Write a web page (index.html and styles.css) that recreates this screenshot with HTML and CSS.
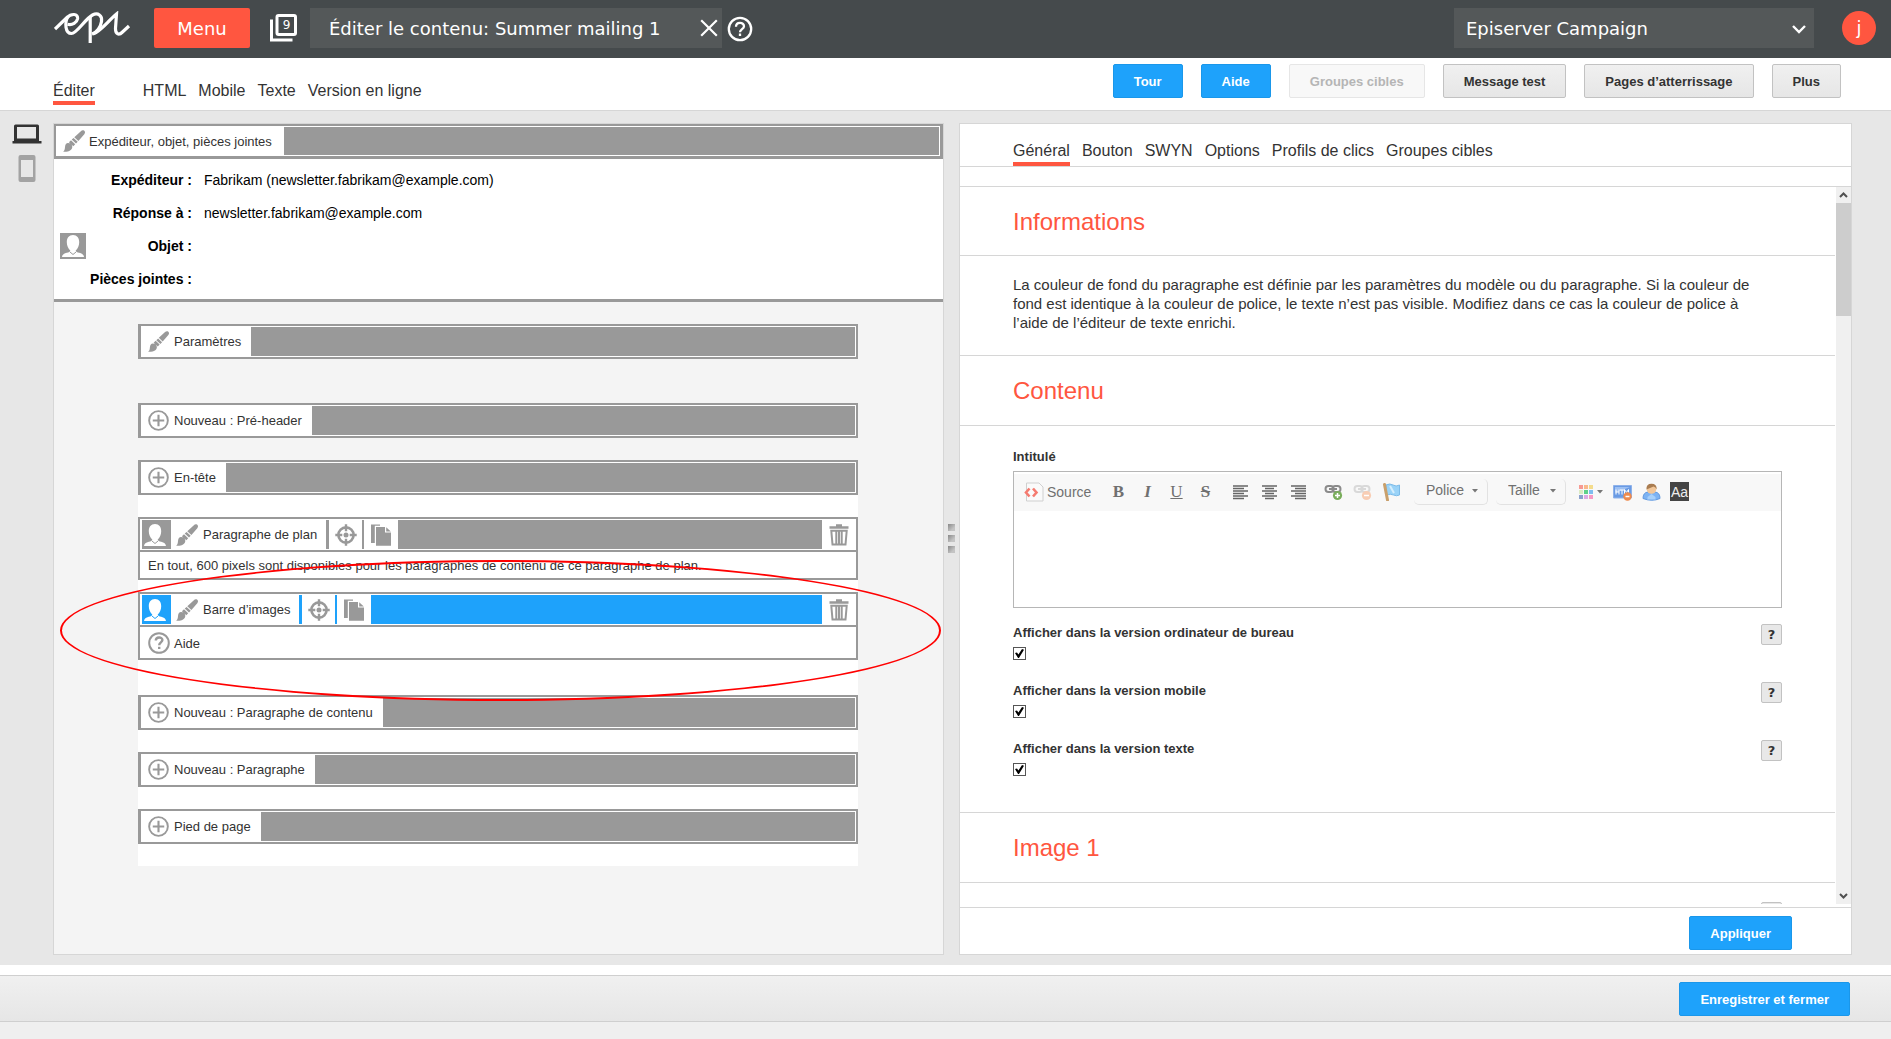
FILE: index.html
```html
<!DOCTYPE html>
<html lang="fr">
<head>
<meta charset="utf-8">
<title>Éditer le contenu: Summer mailing 1</title>
<link rel="stylesheet" href="styles.css">
</head>
<body>
<svg class="defs" aria-hidden="true">
  <symbol id="i-brush" viewBox="0 0 22 22">
    <path fill="currentColor" d="M21 0.600c1.400 0.900 1.200 2.500.3 3.600L15.400 11 11.300 7.200 17.600 1.400C18.700 0.400 20 0 21 0.600zM10.600 7.900l4.100 3.800-1.700 1.900-4.300-4zM8 10.300l4.200 3.900-1.900 2.100-4.400-4.100zM5 13c2.300 0 4.200 1.700 4.300 3.700C9.300 19.800 6.500 22 0.100 21.700c1.300-0.900 1.700-2.200 1.900-4.800 0.200-2.400 1.300-3.800 3-3.900z"/>
  </symbol>
  <symbol id="i-plus" viewBox="0 0 22 22">
    <circle cx="11" cy="11" r="9.800" fill="none" stroke="currentColor" stroke-width="2"/>
    <path d="M11 5v12M5 11h12" stroke="currentColor" stroke-width="2.200" fill="none"/>
  </symbol>
  <symbol id="i-help" viewBox="0 0 22 22">
    <circle cx="11" cy="11" r="9.800" fill="none" stroke="currentColor" stroke-width="2"/>
    <path d="M7.800 8.600c0-4.200 6.600-4 6.600-0.500 0 2.200-3.200 2.400-3.200 5.100" stroke="currentColor" stroke-width="2.400" fill="none"/>
    <path d="M10 14.800h2.400V17H10z" fill="currentColor"/>
  </symbol>
  <symbol id="i-user" viewBox="0 0 26 26">
    <path fill="#fff" d="M13 2c4 0 6.200 3 6.200 7.200 0 3.300-1.500 6.600-3.500 8.200 0.300 1.500 1.500 1.800 3.500 2.300 3 0.700 4.500 2 4.800 4.300H2c0.300-2.300 1.800-3.600 4.800-4.300 2-0.500 3.200-0.800 3.500-2.300-2-1.600-3.500-4.900-3.500-8.200C6.800 5 9 2 13 2z"/>
    <path d="M10 19l3 2.500 3-2.500" fill="none" stroke="currentColor" stroke-width="1"/>
  </symbol>
  <symbol id="i-target" viewBox="0 0 22 22">
    <circle cx="11" cy="11" r="7.600" fill="none" stroke="currentColor" stroke-width="2.600"/>
    <circle cx="11" cy="11" r="2.500" fill="currentColor"/>
    <path d="M11 0.300v7M11 14.700v7M0.300 11h7M14.700 11h7" stroke="currentColor" stroke-width="2.400"/>
  </symbol>
  <symbol id="i-copy" viewBox="0 0 22 22">
    <path fill="currentColor" d="M1 0.500h9v1.200H4.800V19H1zM6 3h9v5.500h6V21.700H6zM16.200 3.200L20.800 7.500h-4.600z"/>
  </symbol>
  <symbol id="i-trash" viewBox="0 0 20 22">
    <path fill="currentColor" d="M7 0.300h6v2h6.500v2.500H0.500V2.300H7z"/>
    <path fill="none" stroke="currentColor" stroke-width="2" d="M2.300 6.800h15.400L16.500 20.500H3.500zM7.300 7v13M10 7v13M12.700 7v13"/>
  </symbol>
</svg>

<header class="topbar">
  <a class="logo" href="#" aria-label="Epi">
    <svg width="78" height="34" viewBox="0 0 78 34" fill="none" stroke="#fff" stroke-width="3.200">
      <path d="M1 18L13 6.500C17 2.500 24.500 2 23.500 8C22.800 11.500 18.500 14.500 13.500 13.300"/>
      <path d="M14 5.500C10.500 11.500 11 22.500 17.500 22.500C23 22.500 31 8 38.500 4C44 1.300 48.500 4.500 47.500 10.500C46.700 16 43 21.500 38 23"/>
      <path d="M36.200 6V32M39 23C46 21 54 10 62.500 3L61.500 17.500C61.400 23.500 65 24.500 68.500 21L75 15"/>
    </svg>
  </a>
  <button class="menu-btn" type="button">Menu</button>
  <button class="windows" type="button" aria-label="Fenêtres ouvertes">
    <svg width="28" height="28" viewBox="0 0 28 28" fill="none" stroke="#fff" stroke-width="3">
      <path d="M1.500 5.500v20.500h21"/><rect x="7" y="1.500" width="18.500" height="19" rx="1.500"/>
    </svg>
    <span class="windows-count">9</span>
  </button>
  <div class="doc-tab">
    <span>Éditer le contenu: Summer mailing 1</span>
    <button class="plain" type="button" aria-label="Fermer">
      <svg width="18" height="18" viewBox="0 0 18 18" stroke="#fff" stroke-width="2.200"><path d="M1.200 1.200l15.600 15.600M16.800 1.200L1.200 16.800"/></svg>
    </button>
  </div>
  <button class="plain top-help" type="button" aria-label="Aide">
    <svg width="26" height="26" viewBox="0 0 26 26" fill="none" stroke="#fff" stroke-width="2.300">
      <circle cx="13" cy="13" r="11.200"/><path d="M9 10.800c0-5.200 8-5 8-0.600 0 2.800-4 3-4 6"/><path d="M13 17.500v2.500"/>
    </svg>
  </button>
  <div class="select-wrap client">
    <select aria-label="Client"><option>Episerver Campaign</option></select>
    <svg width="14" height="9" viewBox="0 0 14 9" fill="none" stroke="#fff" stroke-width="2.400"><path d="M1 1l6 6 6-6"/></svg>
  </div>
  <a class="avatar" href="#">j</a>
</header>

<div class="subbar">
  <nav class="tabs view-tabs">
    <a class="active" href="#">Éditer</a>
    <a href="#">HTML</a>
    <a href="#">Mobile</a>
    <a href="#">Texte</a>
    <a href="#">Version en ligne</a>
  </nav>
  <div class="actions">
    <button class="btn primary" type="button">Tour</button>
    <button class="btn primary" type="button">Aide</button>
    <button class="btn" type="button" disabled>Groupes cibles</button>
    <button class="btn" type="button">Message test</button>
    <button class="btn" type="button">Pages d’atterrissage</button>
    <button class="btn" type="button">Plus</button>
  </div>
</div>

<main class="workspace">
  <div class="devices">
    <button class="plain" type="button" aria-label="Ordinateur">
      <svg width="30" height="20" viewBox="0 0 30 20"><path fill="#333" d="M3.500 0.500h22q1.500 0 1.500 1.500v15h2.500v2.500H0.500V17H2V2q0-1.500 1.500-1.500zM5 3v11.500h19V3z"/></svg>
    </button>
    <button class="plain" type="button" aria-label="Mobile">
      <svg width="18" height="27" viewBox="0 0 18 27"><path fill="#a3a3a3" fill-rule="evenodd" d="M2.500 0h13q2 0 2 2v23q0 2-2 2h-13q-2 0-2-2V2q0-2 2-2zM3 5v17h12V5z"/></svg>
    </button>
  </div>

  <section class="preview">
    <div class="block head-block">
      <div class="bar">
        <button class="label" type="button"><svg width="22" height="22"><use href="#i-brush"/></svg>Expéditeur, objet, pièces jointes</button>
        <span class="fill"></span>
      </div>
    </div>
    <dl class="sender">
      <dt>Expéditeur :</dt><dd>Fabrikam (newsletter.fabrikam@example.com)</dd>
      <dt>Réponse à :</dt><dd>newsletter.fabrikam@example.com</dd>
      <dt><svg class="subject-user" width="26" height="26"><use href="#i-user"/></svg>Objet :</dt><dd></dd>
      <dt>Pièces jointes :</dt><dd></dd>
    </dl>
    <div class="canvas">
      <div class="block settings">
        <div class="bar">
          <button class="label" type="button"><svg width="21" height="21"><use href="#i-brush"/></svg>Paramètres</button>
          <span class="fill"></span>
        </div>
      </div>
      <div class="block">
        <div class="bar">
          <button class="label" type="button"><svg width="21" height="21"><use href="#i-plus"/></svg>Nouveau : Pré-header</button>
          <span class="fill"></span>
        </div>
      </div>
      <div class="mail">
        <div class="block">
          <div class="bar">
            <button class="label" type="button"><svg width="21" height="21"><use href="#i-plus"/></svg>En-tête</button>
            <span class="fill"></span>
          </div>
        </div>
        <div class="block">
          <div class="bar tools">
            <button class="user" type="button" aria-label="Personnaliser"><svg width="26" height="26"><use href="#i-user"/></svg></button>
            <button class="label" type="button"><svg width="22" height="22"><use href="#i-brush"/></svg>Paragraphe de plan</button>
            <button class="tool target" type="button" aria-label="Cibler"><svg width="22" height="22"><use href="#i-target"/></svg></button>
            <button class="tool copy" type="button" aria-label="Copier"><svg width="22" height="22"><use href="#i-copy"/></svg></button>
            <span class="fill"></span>
            <button class="tool" type="button" aria-label="Supprimer"><svg width="20" height="22"><use href="#i-trash"/></svg></button>
          </div>
          <p class="note">En tout, 600 pixels sont disponibles pour les paragraphes de contenu de ce paragraphe de plan.</p>
        </div>
        <div class="block image-bar">
          <div class="bar tools selected">
            <button class="user" type="button" aria-label="Personnaliser"><svg width="26" height="26"><use href="#i-user"/></svg></button>
            <button class="label" type="button"><svg width="22" height="22"><use href="#i-brush"/></svg>Barre d’images</button>
            <button class="tool target" type="button" aria-label="Cibler"><svg width="22" height="22"><use href="#i-target"/></svg></button>
            <button class="tool copy" type="button" aria-label="Copier"><svg width="22" height="22"><use href="#i-copy"/></svg></button>
            <span class="fill"></span>
            <button class="tool" type="button" aria-label="Supprimer"><svg width="20" height="22"><use href="#i-trash"/></svg></button>
          </div>
          <a class="block-help" href="#"><svg width="22" height="22"><use href="#i-help"/></svg>Aide</a>
        </div>
        <div class="block">
          <div class="bar">
            <button class="label" type="button"><svg width="21" height="21"><use href="#i-plus"/></svg>Nouveau : Paragraphe de contenu</button>
            <span class="fill"></span>
          </div>
        </div>
        <div class="block">
          <div class="bar">
            <button class="label" type="button"><svg width="21" height="21"><use href="#i-plus"/></svg>Nouveau : Paragraphe</button>
            <span class="fill"></span>
          </div>
        </div>
        <div class="block">
          <div class="bar">
            <button class="label" type="button"><svg width="21" height="21"><use href="#i-plus"/></svg>Pied de page</button>
            <span class="fill"></span>
          </div>
        </div>
      </div>
    </div>
    <div class="marker"></div>
  </section>

  <div class="splitter"><span></span><span></span><span></span></div>

  <section class="inspector">
    <nav class="tabs inspector-tabs">
      <a class="active" href="#">Général</a>
      <a href="#">Bouton</a>
      <a href="#">SWYN</a>
      <a href="#">Options</a>
      <a href="#">Profils de clics</a>
      <a href="#">Groupes cibles</a>
    </nav>
    <div class="scroller">
      <div class="form">
        <h2>Informations</h2>
        <p class="info">La couleur de fond du paragraphe est définie par les paramètres du modèle ou du paragraphe. Si la couleur de fond est identique à la couleur de police, le texte n’est pas visible. Modifiez dans ce cas la couleur de police à l’aide de l’éditeur de texte enrichi.</p>
        <h2>Contenu</h2>
        <div class="fields">
          <label class="field-label" for="intitule">Intitulé</label>
          <div class="editor">
            <div class="toolbar">
              <button class="source" type="button">
                <svg width="20" height="20" viewBox="0 0 20 20"><path d="M2.500 1h12.500l4 4v14h-16.500z" fill="#fafafa" stroke="#d0d0d0"/><path d="M5.500 6.500L2 10.500l3.500 4M9 6.500l3.500 4-3.500 4" fill="none" stroke="#f57b70" stroke-width="2.600"/></svg>Source
              </button>
              <div class="group styles">
                <button type="button" class="b">B</button>
                <button type="button" class="i">I</button>
                <button type="button" class="u">U</button>
                <button type="button" class="s">S</button>
              </div>
              <div class="group">
                <button type="button" aria-label="Gauche"><svg width="16" height="16" viewBox="0 0 16 16" stroke="#666" stroke-width="1.300"><path d="M0 2h15M0 4.500h11M0 7h15M0 9.500h11M0 12h15M0 14.500h11"/></svg></button>
                <button type="button" aria-label="Centrer"><svg width="16" height="16" viewBox="0 0 16 16" stroke="#666" stroke-width="1.300"><path d="M0 2h15M3 4.500h9M0 7h15M3 9.500h9M0 12h15M3 14.500h9"/></svg></button>
                <button type="button" aria-label="Droite"><svg width="16" height="16" viewBox="0 0 16 16" stroke="#666" stroke-width="1.300"><path d="M0 2h15M4 4.500h11M0 7h15M4 9.500h11M0 12h15M4 14.500h11"/></svg></button>
              </div>
              <div class="group">
                <button type="button" aria-label="Lien"><svg width="19" height="18" viewBox="0 0 19 18"><g fill="none" stroke="#8b8b8b" stroke-width="2"><rect x="1.500" y="3" width="8" height="6" rx="3"/><rect x="8.500" y="3" width="8" height="6" rx="3"/><path d="M5 6h8"/></g><circle cx="13.500" cy="12.500" r="4.600" fill="#79ad5b"/><path d="M13.500 10v5M11 12.500h5" stroke="#fff" stroke-width="1.500"/></svg></button>
                <button type="button" disabled aria-label="Supprimer le lien"><svg width="19" height="18" viewBox="0 0 19 18"><g fill="none" stroke="#d9d9d9" stroke-width="2"><rect x="1.500" y="3" width="8" height="6" rx="3"/><rect x="8.500" y="3" width="8" height="6" rx="3"/><path d="M5 6h8"/></g><circle cx="13.500" cy="12.500" r="4.600" fill="#f8cdb4"/><path d="M11 12.500h5" stroke="#fff" stroke-width="1.500"/></svg></button>
                <button type="button" aria-label="Ancre"><svg width="19" height="18" viewBox="0 0 19 18"><path d="M4 2q4-2 7 0t6.500 0v10q-3 1.500-6 0t-7 0z" fill="#9ad3f8" stroke="#7cbbe8"/><path d="M8 3l4 7" stroke="#d5eefd" stroke-width="2"/><path d="M2.500 1.500l3 15.500" stroke="#c9a06c" stroke-width="3" stroke-linecap="round"/></svg></button>
              </div>
              <div class="select-wrap combo">
                <select aria-label="Police"><option>Police</option></select>
                <svg width="6" height="4" viewBox="0 0 6 4"><path d="M0 0h6L3 3.500z" fill="#777"/></svg>
              </div>
              <div class="select-wrap combo">
                <select aria-label="Taille"><option>Taille</option></select>
                <svg width="6" height="4" viewBox="0 0 6 4"><path d="M0 0h6L3 3.500z" fill="#777"/></svg>
              </div>
              <div class="group extras">
                <button type="button" class="colors" aria-label="Couleur">
                  <svg width="14" height="14" viewBox="0 0 14 14"><path fill="#f79a93" d="M0 0h4v4H0z"/><path fill="#f9b98c" d="M5 0h4v4H5z"/><path fill="#f4dc8c" d="M10 0h4v4h-4z"/><path fill="#dcebc4" d="M0 5h4v4H0z"/><path fill="#5fd08a" d="M5 5h4v4H5z"/><path fill="#7fbdf0" d="M10 5h4v4h-4z"/><path fill="#8ba0cc" d="M0 10h4v4H0z"/><path fill="#dcaae4" d="M5 10h4v4H5z"/><path fill="#f79ac4" d="M10 10h4v4h-4z"/></svg>
                  <svg width="6" height="4" viewBox="0 0 6 4"><path d="M0 0h6L3 3.500z" fill="#777"/></svg>
                </button>
                <button type="button" aria-label="HTML"><svg width="19" height="18" viewBox="0 0 19 18"><path d="M0.500 2.500h18v12.500h-18z" fill="#6a9be4" stroke="#8fb2ea"/><path d="M2 4h15l-15 6z" fill="#9dc0f3"/><path d="M3 6.500v5M6 6.500v5M3 9h3M7 7h4M9 7v4.500M11.500 11.500v-5l2 3 2-3v3" stroke="#fff" fill="none"/><circle cx="14.500" cy="13.500" r="4.200" fill="#ef8a4c"/><path d="M12.500 13.500h4" stroke="#fff" stroke-width="1.500"/></svg></button>
                <button type="button" aria-label="Personnalisation"><svg width="19" height="18" viewBox="0 0 19 18"><path d="M1 15.500q0-6 5-6.500h7q5 0.500 5 6.500-8 3.500-17 0z" fill="#7db3f3" stroke="#5f98e0"/><path d="M5.500 14l4-3 4 3v2.500h-8z" fill="#a6d0fb"/><circle cx="9.500" cy="6" r="4.800" fill="#f2c79a"/><path d="M4.500 6.500Q4 0.800 9.500 0.800t5.200 5.700q-1-2.500-3.200-3-3.500 1.500-7 3z" fill="#a97c50"/></svg></button>
                <button type="button" class="aa">Aa</button>
              </div>
            </div>
            <textarea id="intitule"></textarea>
          </div>
          <div class="check">
            <label class="field-label" for="c1">Afficher dans la version ordinateur de bureau</label>
            <input id="c1" type="checkbox" checked>
            <button class="hint" type="button">?</button>
          </div>
          <div class="check">
            <label class="field-label" for="c2">Afficher dans la version mobile</label>
            <input id="c2" type="checkbox" checked>
            <button class="hint" type="button">?</button>
          </div>
          <div class="check">
            <label class="field-label" for="c3">Afficher dans la version texte</label>
            <input id="c3" type="checkbox" checked>
            <button class="hint" type="button">?</button>
          </div>
        </div>
        <h2>Image 1</h2>
        <div class="next"><button class="hint" type="button" aria-label="Aide sur l’image"></button></div>
      </div>
      <div class="scrollbar">
        <svg width="9" height="6" viewBox="0 0 9 6" fill="none" stroke="#505050" stroke-width="2"><path d="M1 5l3.500-3.500L8 5"/></svg>
        <span class="thumb"></span>
        <svg width="9" height="6" viewBox="0 0 9 6" fill="none" stroke="#505050" stroke-width="2"><path d="M1 1l3.500 3.500L8 1"/></svg>
      </div>
    </div>
    <div class="apply"><button class="btn primary" type="button">Appliquer</button></div>
  </section>
</main>

<footer class="footer">
  <div class="footer-bar"><button class="btn primary" type="button">Enregistrer et fermer</button></div>
</footer>
</body>
</html>
```
FILE: styles.css
```css
* { box-sizing: border-box; }

body {
  margin: 0;
  height: 100vh;
  min-height: 980px;
  display: flex;
  flex-direction: column;
  font-family: "Liberation Sans", Arial, sans-serif;
  font-size: 13px;
  color: #333;
  background: #fff;
}

button, select, textarea, input { font: inherit; color: inherit; margin: 0; }
button { padding: 0; border: 0; background: none; cursor: pointer; }
a { color: inherit; text-decoration: none; }
svg { display: block; flex: none; }
h2, p, dl, dd { margin: 0; }
.defs { position: absolute; width: 0; height: 0; }
.plain { display: flex; }

/* Top bar */
.topbar {
  height: 58px;
  flex: none;
  display: flex;
  align-items: center;
  padding: 0 15px 2px 54px;
  background: #454a4c;
  color: #fff;
  font-family: "DejaVu Sans", Verdana, sans-serif;
  font-size: 18px;
}
.logo { margin-right: 22px; }
.menu-btn { width: 96px; height: 40px; border-radius: 2px; background: #ff5640; }
.windows { display: grid; margin: 0 7px 0 20px; }
.windows svg, .windows-count { grid-area: 1 / 1; }
.windows-count { width: 33px; font-size: 12px; line-height: 22px; }
.doc-tab {
  width: 412px;
  height: 40px;
  display: flex;
  align-items: center;
  justify-content: space-between;
  padding: 0 4px 0 19px;
  background: #545859;
  white-space: nowrap;
}
.top-help { margin: 2px 0 0 5px; }

.select-wrap { display: grid; align-items: center; }
.select-wrap select, .select-wrap svg { grid-area: 1 / 1; }
.select-wrap svg { justify-self: end; pointer-events: none; }
.select-wrap select { appearance: none; border: 0; background: none; outline: 0; width: 100%; height: 100%; }
.client { width: 360px; height: 40px; margin-left: auto; background: #545859; }
.client select { padding: 0 12px; }
.client option { color: #333; }
.client svg { margin: 3px 8px 0 0; }
.avatar {
  width: 34px;
  height: 34px;
  margin-left: 28px;
  border-radius: 50%;
  background: #ff5640;
  line-height: 34px;
  text-align: center;
}

/* Second bar */
.subbar {
  height: 53px;
  flex: none;
  display: flex;
  justify-content: space-between;
  padding: 0 50px 0 53px;
  border-bottom: 1px solid #d6d6d6;
}
.tabs { display: flex; gap: 12px; font-size: 16px; line-height: 20px; }
.tabs a { border-bottom: 4px solid transparent; }
.tabs .active { border-color: #ff5640; }
.view-tabs { padding-top: 23px; }
.view-tabs a { height: 24px; }
.view-tabs .active { margin-right: 36px; }
.actions { display: flex; gap: 18px; padding-top: 6px; }

.btn {
  height: 34px;
  padding: 0 20px;
  border: 1px solid #c2c2c2;
  border-radius: 2px;
  background: linear-gradient(#f0f0f0, #e6e6e6);
  font-weight: bold;
  white-space: nowrap;
}
.btn:disabled { border-color: #e6e6e6; background: #f8f8f8; color: #b5b5b5; cursor: default; }
.btn.primary { border-color: #1a97ea; background: #1ea2fb; color: #fff; }

/* Workspace */
.workspace {
  flex: 1;
  min-height: 0;
  display: grid;
  grid-template-columns: 53px minmax(0, 891fr) 15px minmax(0, 893fr);
  padding: 12px 39px 10px 0;
  background: #e7e7e7;
}
.devices { display: flex; flex-direction: column; align-items: center; gap: 11px; }
.devices button:first-child { padding-top: 1px; }
.preview, .inspector { border: 1px solid #d6d6d6; min-height: 0; }

.preview { position: relative; display: flex; flex-direction: column; overflow: hidden; background: #f4f4f4; }
.block {
  border: 2px solid #999;
  border-left-width: 3px;
  background: #fff;
}
.head-block { border-width: 2px 3px 3px 2px; }
.bar { display: flex; height: 31px; padding: 1px; color: #999; }
.head-block .bar { height: 30px; }
.fill { flex: 1; background: currentColor; }
.label { display: flex; align-items: center; gap: 5px; padding: 0 10px 0 6px; color: #333; white-space: nowrap; }
.label svg { color: #999; }
.head-block .label { gap: 4px; padding-right: 12px; }

.sender {
  display: grid;
  grid-template-columns: 138px 1fr;
  grid-auto-rows: 33px;
  column-gap: 12px;
  align-items: center;
  padding: 4px 0;
  border-bottom: 3px solid #999;
  background: #fff;
  color: #000;
  font-size: 14px;
}
.sender dt { display: flex; align-items: center; justify-content: flex-end; font-weight: bold; white-space: nowrap; }
.subject-user { margin: 0 auto 0 6px; background: #999; color: #999; }

.canvas { padding: 22px 85px 0 84px; }
.settings { margin-bottom: 44px; }
.mail { margin-top: 22px; padding-bottom: 22px; background: #fff; }
.mail .block { margin-bottom: 22px; }
.mail .block:nth-child(2) { margin-bottom: 12px; }
.mail .block:nth-child(2), .image-bar { border-left-width: 2px; }
.mail .image-bar { margin-bottom: 35px; }
.mail .block:last-child { margin-bottom: 0; }
.tools { padding-left: 2px; }
.user { display: grid; place-items: center start; width: 29px; background: #999; color: #999; }
.selected { color: #1ea2fb; }
.selected .user { background: #1ea2fb; color: #1ea2fb; }
.tools .label { padding: 0 9px 0 5px; }
.tool { display: grid; place-items: center; width: 33px; }
.tool svg { color: #999; }
.tool.target { width: 36px; border-left: 3px solid; color: inherit; }
.tool.copy { width: 36px; border-left: 2px solid; color: inherit; }
.note { height: 28px; padding-left: 8px; border-top: 2px solid #999; line-height: 27px; white-space: nowrap; overflow: hidden; }
.block-help { display: flex; align-items: center; gap: 4px; height: 33px; padding: 1px 0 0 8px; border-top: 2px solid #999; }
.block-help svg { color: #999; }

/* Annotation lying over the preview */
.marker {
  position: absolute;
  left: 6px;
  right: 2px;
  top: 436px;
  height: 141px;
  border: 2px solid #f00;
  border-radius: 50%;
  pointer-events: none;
}

.splitter { display: flex; flex-direction: column; align-items: center; justify-content: center; gap: 4px; padding-bottom: 2px; }
.splitter span { width: 7px; height: 7px; background: linear-gradient(135deg, #888, #c4c4c4 70%); }

/* Inspector */
.inspector { display: flex; flex-direction: column; background: #fff; }
.inspector-tabs { flex: none; padding: 17px 53px 0; height: 43px; border-bottom: 1px solid #d6d6d6; }
.inspector-tabs a { height: 25px; }
.scroller { flex: 1; min-height: 0; display: flex; margin: 19px 0 3px; border-top: 1px solid #d6d6d6; }
.form { flex: 1; overflow: hidden; padding-right: 1px; }
.form h2 {
  height: 70px;
  padding-left: 53px;
  border-bottom: 1px solid #d6d6d6;
  color: #ff5640;
  font-size: 24px;
  font-weight: normal;
  line-height: 69px;
}
.form h2:first-child { height: 69px; }
.info { padding: 19px 60px 23px 53px; border-bottom: 1px solid #d6d6d6; font-size: 15px; line-height: 19px; }
.fields { padding: 22px 53px 14px; border-bottom: 1px solid #d6d6d6; }
.field-label { display: block; font-weight: bold; line-height: 18px; }
.editor { height: 137px; display: flex; flex-direction: column; margin: 5px 0 16px; padding-top: 2px; border: 1px solid #b6b6b6; }
.editor textarea { flex: 1; width: 100%; border: 0; outline: 0; resize: none; background: transparent; }
.toolbar { display: flex; align-items: center; height: 37px; padding: 0 0 2px 10px; background: #f8f8f8; color: #707070; font-size: 14px; }
.source { display: flex; align-items: center; gap: 3px; width: 80px; }
.group { display: flex; align-items: center; }
.group button { width: 29px; height: 26px; display: flex; align-items: center; justify-content: center; }
.group + .group { margin-left: 6px; }
.styles { font-family: "Liberation Serif", "Times New Roman", serif; font-size: 17px; }
.b { font-weight: bold; }
.i { font-style: italic; font-weight: bold; }
.u { text-decoration: underline; }
.s { text-decoration: line-through; font-weight: bold; }
.combo { width: 74px; height: 26px; margin-left: 8px; border: solid #e2e2e2; border-width: 0 1px 1px 0; border-radius: 5px; }
.combo + .combo { width: 70px; }
.combo select { padding: 0 12px 3px; }
.combo svg { margin-right: 9px; }
.extras { margin-left: 8px; }
.group .colors { width: 34px; gap: 4px; }
.group .aa { width: 19px; height: 19px; margin-left: 4px; background: #444; color: #eee; font-size: 14px; }

.check { display: grid; grid-template: 23px 1fr / 1fr 21px; height: 58px; }
.check .field-label { grid-area: 1 / 1; }
.check input { grid-area: 2 / 1; }
.check .hint { grid-area: 1 / 2 / 3 / 2; }
.check input {
  appearance: none;
  width: 13px;
  height: 13px;
  border: 1px solid #555;
  background: #fff;
  display: grid;
  place-items: center;
}
.check input:checked::before {
  content: "";
  width: 9px;
  height: 9px;
  background: #000;
  clip-path: polygon(0 45%, 22% 38%, 38% 62%, 78% 0, 100% 8%, 44% 100%, 34% 100%);
}
.hint {
  width: 21px;
  height: 21px;
  border: 1px solid #c2c2c2;
  border-radius: 2px;
  background: #e8e8e8;
  font-family: "DejaVu Sans", Verdana, sans-serif;
  font-weight: bold;
  line-height: 19px;
}
.next { display: flex; justify-content: flex-end; padding: 19px 53px 0; }

.scrollbar { width: 15px; display: flex; flex-direction: column; align-items: center; padding: 5px 0; background: #f0f0f0; }
.thumb { width: 15px; height: 16%; margin: 5px 0 auto; background: #cdcdcd; }
.apply { flex: none; display: flex; justify-content: flex-end; padding: 8px 59px 4px; border-top: 1px solid #d6d6d6; }

/* Footer */
.footer { flex: none; padding: 10px 0 17px; background: linear-gradient(#fff 10px, #efefef 10px); }
.footer-bar {
  display: flex;
  justify-content: flex-end;
  padding: 6px 41px 5px;
  border: solid #cfcfcf;
  border-width: 1px 0;
  background: linear-gradient(#f0f0f0, #e6e6e6);
}
```
